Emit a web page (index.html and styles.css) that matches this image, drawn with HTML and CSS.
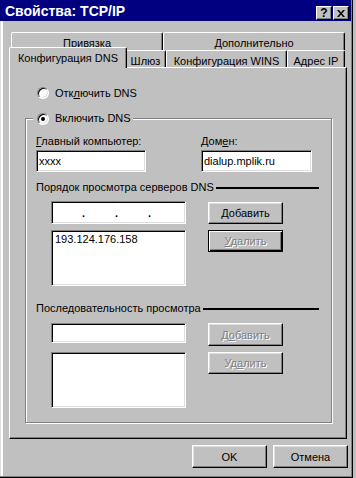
FILE: index.html
```html
<!DOCTYPE html>
<html lang="ru">
<head>
<meta charset="utf-8">
<title>Свойства: TCP/IP</title>
<link rel="stylesheet" href="styles.css">
</head>
<body>
<div class="window">
  <div class="titlebar">
    <span class="title">Свойства: TCP/IP</span>
    <div class="tbtns">
      <span class="tbtn">?</span>
      <span class="tbtn"><svg width="8" height="7" viewBox="0 0 8 7"><path d="M0 0h2l2 2.4L6 0h2L5 3.5 8 7H6L4 4.6 2 7H0l3-3.5z" fill="#000"/></svg></span>
    </div>
  </div>
  <div class="body">
    <div class="tabs">
      <div class="tab-row back">
        <div class="tab w-bind">Привязка</div>
        <div class="tab w-adv">Дополнительно</div>
      </div>
      <div class="tab-row front">
        <div class="tab active w-dns">Конфигурация DNS</div>
        <div class="tab w-gw">Шлюз</div>
        <div class="tab w-wins">Конфигурация WINS</div>
        <div class="tab w-ip">Адрес IP</div>
      </div>
    </div>
    <div class="panel">
      <div class="radio-row"><span class="radio"></span><span>Отк<u>л</u>ючить DNS</span></div>
      <fieldset class="group">
        <legend><span class="radio checked"></span>Включить DNS</legend>
        <div class="fields">
          <div class="field host">
            <div class="label"><u>Г</u>лавный компьютер:</div>
            <div class="input">xxxx</div>
          </div>
          <div class="field domain">
            <div class="label">Дом<u>е</u>н:</div>
            <div class="input">dialup.mplik.ru</div>
          </div>
        </div>
        <div class="section-head first-head"><span>Порядок просмотра серверов DNS</span><span class="rule"></span></div>
        <div class="section first">
          <div class="col-left">
            <div class="input ip"><span class="dot">.</span><span class="dot">.</span><span class="dot">.</span></div>
            <div class="list">193.124.176.158</div>
          </div>
          <div class="col-right">
            <div class="btn"><span><u>Д</u>обавить</span></div>
            <div class="btn default disabled"><span><u>У</u>далить</span></div>
          </div>
        </div>
        <div class="section-head second-head"><span>Последовательность просмотра</span><span class="rule"></span></div>
        <div class="section second">
          <div class="col-left">
            <div class="input suffix"></div>
            <div class="list"></div>
          </div>
          <div class="col-right">
            <div class="btn tall disabled"><span>Д<u>о</u>бавить</span></div>
            <div class="btn disabled"><span>Уд<u>а</u>лить</span></div>
          </div>
        </div>
      </fieldset>
    </div>
    <div class="footer">
      <div class="btn">OK</div>
      <div class="btn">Отмена</div>
    </div>
  </div>
</div>
</body>
</html>
```
FILE: styles.css
```css
* { box-sizing: border-box; }
html, body { margin: 0; padding: 0; }
body {
  background: #c0c0c0;
  width: 356px;
  height: 478px;
  overflow: hidden;
  font-family: "Liberation Sans", Arial, sans-serif;
  font-size: 11px;
  color: #000;
}
u { text-decoration: underline; text-underline-offset: 1px; }

.window {
  width: 353px;
  height: 478px;
  border-right: 1px solid #000;
  border-bottom: 1px solid #000;
  padding: 0 1px 1px 0;
  box-shadow: inset -1px -1px 0 #808080;
  display: flex;
  flex-direction: column;
}

.titlebar {
  height: 21px;
  flex: none;
  background: #000080;
  color: #fff;
  display: flex;
  justify-content: space-between;
  align-items: center;
  padding: 0 2px 0 5px;
}
.title { font-weight: bold; font-size: 14px; padding-top: 1px; }
.tbtns { display: flex; gap: 1px; align-self: flex-start; margin-top: 6px; }
.tbtn {
  width: 16px;
  height: 14px;
  background: #c0c0c0;
  border: 1px solid;
  border-color: #fff #000 #000 #fff;
  box-shadow: inset -1px -1px 0 #808080;
  color: #000;
  font-weight: bold;
  font-size: 12px;
  line-height: 1;
  display: flex;
  align-items: center;
  justify-content: center;
}

.body {
  flex: 1;
  padding: 11px 0 0 9px;
  box-shadow: inset 1px 0 0 #dfdfdf, inset 3px 0 0 #fff;
}

.tabs { width: 338px; }
.tab-row { display: flex; padding-left: 2px; }
.tab {
  display: flex;
  align-items: center;
  justify-content: center;
  background: #c0c0c0;
  border-top: 1px solid #fff;
  border-left: 1px solid #fff;
  border-right: 1px solid #000;
  box-shadow: inset -1px 0 0 #808080;
  border-radius: 2px 2px 0 0;
  white-space: nowrap;
}
.back .tab { height: 18px; padding-top: 2px; }
.front .tab { height: 17px; padding-top: 3px; }
.w-bind { width: 152px; }
.w-adv { width: 182px; }
.w-dns { width: 114px; }
.w-gw { width: 41px; }
.w-wins { width: 121px; }
.w-ip { width: 58px; }
.front .tab.active {
  position: relative;
  z-index: 1;
  width: 118px;
  height: 21px;
  margin: -3px -2px -1px;
  padding-top: 0;
}

.panel {
  width: 338px;
  height: 372px;
  border-top: 1px solid #fff;
  border-left: 1px solid #fff;
  border-right: 1px solid #000;
  border-bottom: 1px solid #000;
  box-shadow: inset -1px -1px 0 #808080;
  padding: 0 0 0 15px;
}

.radio-row {
  display: flex;
  align-items: center;
  height: 13px;
  margin-top: 18px;
  padding-left: 12px;
}
.radio {
  flex: none;
  width: 12px;
  height: 12px;
  border-radius: 50%;
  background: #fff;
  border: 1px solid;
  border-color: #808080 #fff #fff #808080;
  box-shadow: inset 1px 1px 0 #000, inset -1px -1px 0 #dfdfdf;
  margin-right: 6px;
  display: flex;
  align-items: center;
  justify-content: center;
}
.radio.checked::after {
  content: "";
  width: 4px;
  height: 4px;
  border-radius: 50%;
  background: #000;
}

.group {
  width: 307px;
  min-inline-size: 0;
  margin: 13px 0 0 0;
  padding: 0 0 14px 10px;
  border: 1px solid #808080;
  box-shadow: 1px 1px 0 #fff, inset 1px 1px 0 #fff;
}
.group legend {
  display: flex;
  align-items: center;
  height: 13px;
  line-height: 13px;
  padding: 0 2px 0 4px;
  margin-left: -3px;
  background: #c0c0c0;
}

.fields { display: flex; gap: 55px; margin-top: 10px; }
.label { line-height: 13px; margin-bottom: 2px; }
.input {
  background: #fff;
  border: 1px solid;
  border-color: #808080 #fff #fff #808080;
  box-shadow: inset 1px 1px 0 #000, inset -1px -1px 0 #dfdfdf;
  padding: 0 2px;
  display: flex;
  align-items: center;
}
.host .input { width: 110px; height: 22px; }
.domain .input { width: 111px; height: 22px; }

.section-head {
  display: flex;
  align-items: center;
  width: 283px;
  line-height: 13px;
  height: 13px;
}
.first-head { margin-top: 9px; }
.second-head { margin-top: 16px; }
.rule { flex: 1; height: 2px; background: #000; margin-left: 2px; }

.section { display: flex; gap: 22px; margin-left: 15px; }
.section.first { margin-top: 7px; }
.section.second { margin-top: 8px; }
.col-left { display: flex; flex-direction: column; width: 135px; }
.col-right { display: flex; flex-direction: column; width: 75px; gap: 6px; }
.first .col-left { gap: 6px; }
.first .col-right { margin-top: 1px; }
.second .col-left { gap: 9px; }

.ip { height: 23px; padding-left: 30px; gap: 30px; }
.dot { width: 3px; line-height: 1; padding-top: 2px; font-weight: bold; }
.suffix { height: 20px; }
.list {
  height: 56px;
  background: #fff;
  border: 1px solid;
  border-color: #808080 #fff #fff #808080;
  box-shadow: inset 1px 1px 0 #000, inset -1px -1px 0 #dfdfdf;
  padding: 2px 3px;
  line-height: 13px;
}

.btn {
  height: 22px;
  width: 75px;
  background: #c0c0c0;
  border: 1px solid;
  border-color: #fff #000 #000 #fff;
  box-shadow: inset -1px -1px 0 #808080, inset 1px 1px 0 #dfdfdf;
  display: flex;
  align-items: center;
  justify-content: center;
}
.btn.tall { height: 23px; }
.btn.default {
  border: 1px solid #000;
  box-shadow: inset 1px 1px 0 #fff, inset -1px -1px 0 #000, inset -2px -2px 0 #808080;
}
.disabled { color: #808080; text-shadow: 1px 1px 0 #fff; }

.footer {
  display: flex;
  justify-content: flex-end;
  gap: 6px;
  width: 339px;
  margin-top: 6px;
}
.footer .btn { height: 23px; }
```
